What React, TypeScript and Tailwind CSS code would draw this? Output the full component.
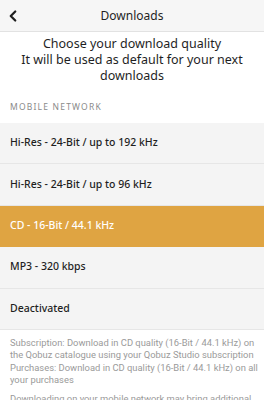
import { ChevronLeft } from "lucide-react";

const options = [
  { label: "Hi-Res - 24-Bit / up to 192 kHz", active: false },
  { label: "Hi-Res - 24-Bit / up to 96 kHz", active: false },
  { label: "CD - 16-Bit / 44.1 kHz", active: true },
  { label: "MP3 - 320 kbps", active: false },
  { label: "Deactivated", active: false },
];

export default function App() {
  return (
    <div
      className="w-[264px] h-[400px] overflow-hidden bg-white text-[#1f1f1f]"
      style={{ fontFamily: '"Noto Sans", "Open Sans", sans-serif' }}
    >
      {/* header */}
      <div className="relative h-[32px] flex items-center justify-center bg-[#f6f6f6] border-b border-[#e2e2e2]">
        <ChevronLeft className="absolute left-[4px] top-[7px] w-[18px] h-[18px]" strokeWidth={3} />
        <span className="text-[12px] leading-none">Downloads</span>
      </div>

      <div className="pt-[4px] text-center text-[12.5px] leading-[16px]">
        <p>Choose your download quality</p>
        <p>It will be used as default for your next downloads</p>
      </div>

      <div className="mt-[17px] px-[10px] text-[8.5px] tracking-[1.2px] text-[#8a8a8a] leading-[12px]">
        MOBILE NETWORK
      </div>

      <div className="mt-[10px]">
        {options.map((o) => (
          <div
            key={o.label}
            className={
              "h-[41.4px] flex items-center px-[10px] text-[10.5px] font-medium border-b " +
              (o.active
                ? "bg-[#dfa442] text-white border-[#dfa442]"
                : "bg-[#f4f4f4] border-[#e6e6e6]")
            }
          >
            {o.label}
          </div>
        ))}
      </div>

      <div
        className="pl-[10px] pr-[4px] pt-[7px] text-[9.4px] leading-[12.5px] text-[#9a9a9a]"
        style={{ fontFamily: "Roboto, sans-serif" }}
      >
        <p>
          Subscription: Download in CD quality (16-Bit / 44.1 kHz) on the Qobuz catalogue using your Qobuz
          Studio subscription
        </p>
        <p>Purchases: Download in CD quality (16-Bit / 44.1 kHz) on all your purchases</p>
        <p className="mt-[6px]">Downloading on your mobile network may bring additional costs</p>
      </div>
    </div>
  );
}
